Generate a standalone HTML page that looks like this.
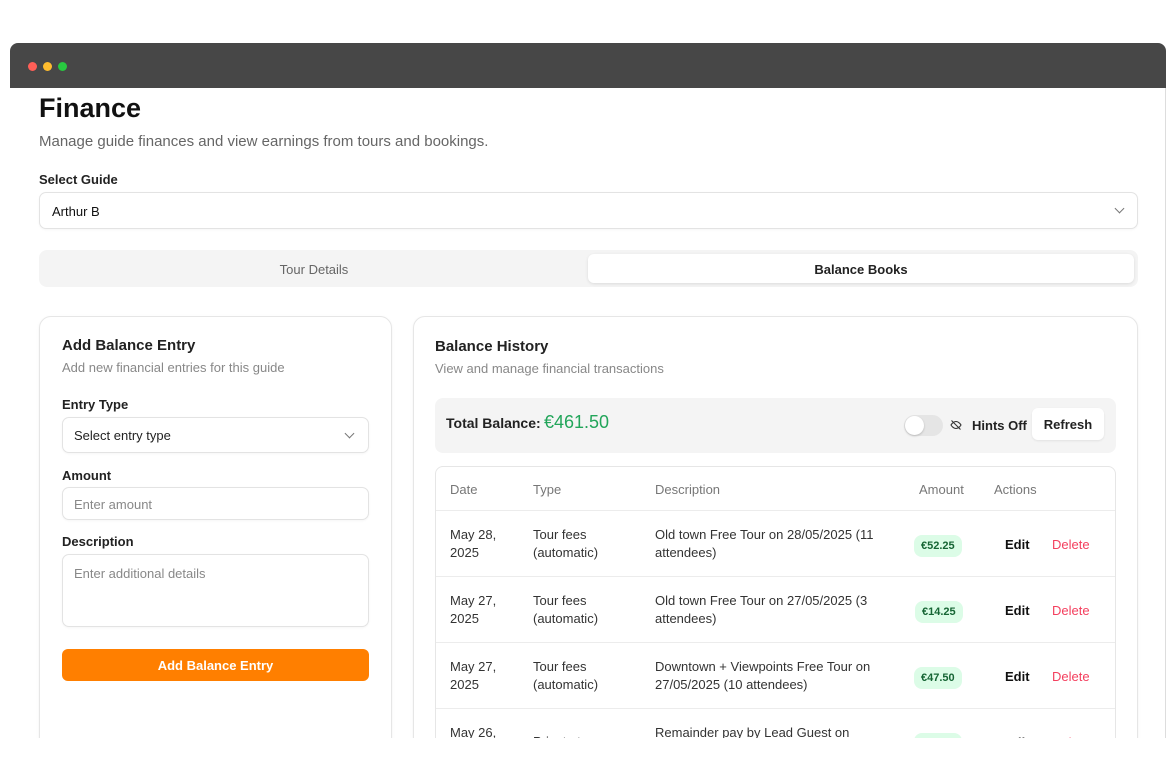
<!DOCTYPE html>
<html><head><meta charset="utf-8"><style>
*{box-sizing:border-box;margin:0;padding:0}
body{width:1175px;height:783px;background:#fff;font-family:"Liberation Sans",sans-serif;position:relative;overflow:hidden;color:#111}
.a{position:absolute}
.bar{left:10px;top:43px;width:1156px;height:45px;background:#474747;border-radius:8px 8px 0 0}
.dot{width:9px;height:9px;border-radius:50%;top:62px}
.clip{left:10px;top:88px;width:1156px;height:650px;overflow:hidden;border-right:1px solid #ddd}
.card{border:1px solid #e6e6e6;border-radius:12px;background:#fff;box-shadow:0 1px 3px rgba(0,0,0,.05)}
.inp{border:1px solid #e3e3e3;border-radius:7px;background:#fff;font-size:13px;box-shadow:0 1px 2px rgba(0,0,0,.04)}
.lbl{font-size:13px;font-weight:bold;color:#222}
.chev{width:7px;height:7px;border-right:1.4px solid #777;border-bottom:1.4px solid #777;transform:rotate(45deg)}
.row{left:0;width:680px;border-top:1px solid #ececec;height:66px;font-size:13px;color:#333;line-height:18px}
.pill{background:#dcfce7;color:#166534;font-size:11px;border-radius:8px;padding:2px 7px;font-weight:bold}
.ed{font-weight:bold;color:#111;font-size:13px}
.del{color:#f43f5e;font-size:13px}
</style></head><body>
<div class="a bar"></div>
<div class="a dot" style="left:28px;background:#ff5f57"></div>
<div class="a dot" style="left:43px;background:#febc2e"></div>
<div class="a dot" style="left:58px;background:#28c840"></div>
<div class="a clip">
 <div class="a" style="left:29px;top:5px;font-size:27px;font-weight:bold">Finance</div>
 <div class="a" style="left:29px;top:45px;font-size:15px;color:#666">Manage guide finances and view earnings from tours and bookings.</div>
 <div class="a lbl" style="left:29px;top:84px">Select Guide</div>
 <div class="a inp" style="left:29px;top:104px;width:1099px;height:37px;padding:11px 12px">Arthur B</div>
 <div class="a chev" style="left:1106px;top:117px"></div>
 <div class="a" style="left:29px;top:162px;width:1099px;height:37px;background:#f4f4f4;border-radius:8px"></div>
 <div class="a" style="left:29px;top:174px;width:550px;text-align:center;font-size:13px;color:#666">Tour Details</div>
 <div class="a" style="left:578px;top:166px;width:546px;height:29px;background:#fff;border-radius:6px;box-shadow:0 1px 3px rgba(0,0,0,.1);text-align:center;font-size:13px;padding-top:8px;font-weight:bold;color:#222">Balance Books</div>

 <div class="a card" style="left:29px;top:228px;width:353px;height:460px"></div>
 <div class="a" style="left:52px;top:249px;font-size:15px;font-weight:bold;color:#222">Add Balance Entry</div>
 <div class="a" style="left:52px;top:272px;font-size:13px;color:#888">Add new financial entries for this guide</div>
 <div class="a lbl" style="left:52px;top:309px">Entry Type</div>
 <div class="a inp" style="left:52px;top:329px;width:307px;height:36px;padding:10px 11px;color:#222">Select entry type</div>
 <div class="a chev" style="left:336px;top:342px"></div>
 <div class="a lbl" style="left:52px;top:380px">Amount</div>
 <div class="a inp" style="left:52px;top:399px;width:307px;height:33px;padding:9px 11px;color:#888">Enter amount</div>
 <div class="a lbl" style="left:52px;top:446px">Description</div>
 <div class="a inp" style="left:52px;top:466px;width:307px;height:73px;padding:11px 11px;color:#888">Enter additional details</div>
 <div class="a" style="left:52px;top:561px;width:307px;height:32px;background:#ff7f00;border-radius:6px;color:#fff;font-weight:bold;font-size:13px;text-align:center;padding-top:9px">Add Balance Entry</div>

 <div class="a card" style="left:403px;top:228px;width:725px;height:460px;overflow:hidden">
  <div class="a" style="left:21px;top:21px;font-size:15px;font-weight:bold;color:#222">Balance History</div>
  <div class="a" style="left:21px;top:44px;font-size:13px;color:#888">View and manage financial transactions</div>
  <div class="a" style="left:21px;top:81px;width:681px;height:55px;background:#f4f4f4;border-radius:8px"></div>
  <div class="a" style="left:32px;top:98px;font-size:14px;font-weight:bold;color:#222">Total Balance:</div>
  <div class="a" style="left:130px;top:95px;font-size:18px;color:#22a55a">€461.50</div>
  <div class="a" style="left:490px;top:98px;width:39px;height:21px;border-radius:11px;background:#e5e5e5"></div>
  <div class="a" style="left:491px;top:99px;width:19px;height:19px;border-radius:50%;background:#fff;box-shadow:0 1px 2px rgba(0,0,0,.2)"></div>
  <svg class="a" style="left:536px;top:102px" width="12" height="12" viewBox="0 0 24 24" fill="none" stroke="#333" stroke-width="2.2"><path d="M2 12s4-7 10-7 10 7 10 7-4 7-10 7S2 12 2 12z"/><path d="M3 3l18 18"/></svg>
  <div class="a" style="left:558px;top:101px;font-size:13px;font-weight:bold;color:#222">Hints Off</div>
  <div class="a" style="left:618px;top:91px;width:72px;height:32px;background:#fff;border-radius:6px;box-shadow:0 1px 2px rgba(0,0,0,.08);font-size:13px;font-weight:bold;text-align:center;padding-top:9px;color:#222">Refresh</div>
  <div class="a" style="left:21px;top:149px;width:681px;height:320px;border:1px solid #e6e6e6;border-radius:8px;overflow:hidden">
   <div class="a" style="top:0;left:0;width:680px;height:44px;font-size:13px;color:#777">
    <span class="a" style="left:14px;top:15px">Date</span><span class="a" style="left:97px;top:15px">Type</span><span class="a" style="left:219px;top:15px">Description</span><span class="a" style="left:483px;top:15px">Amount</span><span class="a" style="left:558px;top:15px">Actions</span>
   </div>
   <div class="a row" style="top:43px"><span class="a" style="left:14px;top:15px">May 28,<br>2025</span><span class="a" style="left:97px;top:15px">Tour fees<br>(automatic)</span><span class="a" style="left:219px;top:15px">Old town Free Tour on 28/05/2025 (11<br>attendees)</span><span class="a pill" style="left:478px;top:24px">€52.25</span><span class="a ed" style="left:569px;top:25px">Edit</span><span class="a del" style="left:616px;top:25px">Delete</span></div>
   <div class="a row" style="top:109px"><span class="a" style="left:14px;top:15px">May 27,<br>2025</span><span class="a" style="left:97px;top:15px">Tour fees<br>(automatic)</span><span class="a" style="left:219px;top:15px">Old town Free Tour on 27/05/2025 (3<br>attendees)</span><span class="a pill" style="left:479px;top:24px">€14.25</span><span class="a ed" style="left:569px;top:25px">Edit</span><span class="a del" style="left:616px;top:25px">Delete</span></div>
   <div class="a row" style="top:175px"><span class="a" style="left:14px;top:15px">May 27,<br>2025</span><span class="a" style="left:97px;top:15px">Tour fees<br>(automatic)</span><span class="a" style="left:219px;top:15px">Downtown + Viewpoints Free Tour on<br>27/05/2025 (10 attendees)</span><span class="a pill" style="left:478px;top:24px">€47.50</span><span class="a ed" style="left:569px;top:25px">Edit</span><span class="a del" style="left:616px;top:25px">Delete</span></div>
   <div class="a row" style="top:241px"><span class="a" style="left:14px;top:15px">May 26,<br>2025</span><span class="a" style="left:97px;top:24px">Private tour</span><span class="a" style="left:219px;top:15px">Remainder pay by Lead Guest on<br>26/05/2025</span><span class="a pill" style="left:478px;top:24px">€10.00</span><span class="a ed" style="left:569px;top:25px">Edit</span><span class="a del" style="left:616px;top:25px">Delete</span></div>
  </div>
 </div>
</div>
</body></html>
